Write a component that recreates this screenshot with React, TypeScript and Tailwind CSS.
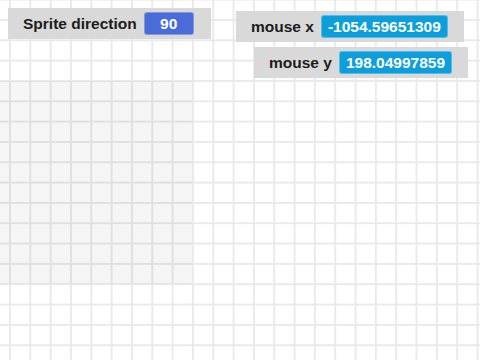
function Monitor({
    label,
    value,
    color,
    className,
}: {
    label: string;
    value: string;
    color: string;
    className: string;
}) {
    return (
        <div
            className={`absolute flex h-[31px] items-center bg-[#d9d9d9] pl-[15px] pr-4 ${className}`}
        >
            <span className="text-[15.5px] font-bold text-[#1c1c1c]">
                {label}
            </span>
            <span
                className={`ml-[7px] flex h-[23px] min-w-[50px] items-center justify-center rounded-[3px] border border-white/30 px-[6px] text-[15.5px] font-bold text-white ${color}`}
            >
                {value}
            </span>
        </div>
    );
}

export default function App() {
    return (
        <div className="relative h-[360px] w-[480px] overflow-hidden bg-white font-['Liberation_Sans',Arial,sans-serif] leading-none [background-image:linear-gradient(to_right,#eaeaea_2px,transparent_2px),linear-gradient(to_bottom,#eaeaea_2px,transparent_2px)] [background-position:9px_19px] [background-size:20.333px_20.333px]">
            {/* sprite */}
            <div className="absolute left-0 top-[81px] h-[203px] w-[192px] bg-black/[0.04]" />

            <Monitor
                label="Sprite direction"
                value="90"
                color="bg-[#4a6cd9]"
                className="left-[8px] top-[8px] w-[203px]"
            />
            <Monitor
                label="mouse x"
                value="-1054.59651309"
                color="bg-[#0c9fdc]"
                className="left-[236px] top-[11px]"
            />
            <Monitor
                label="mouse y"
                value="198.04997859"
                color="bg-[#0c9fdc]"
                className="left-[254px] top-[47px]"
            />
        </div>
    );
}
